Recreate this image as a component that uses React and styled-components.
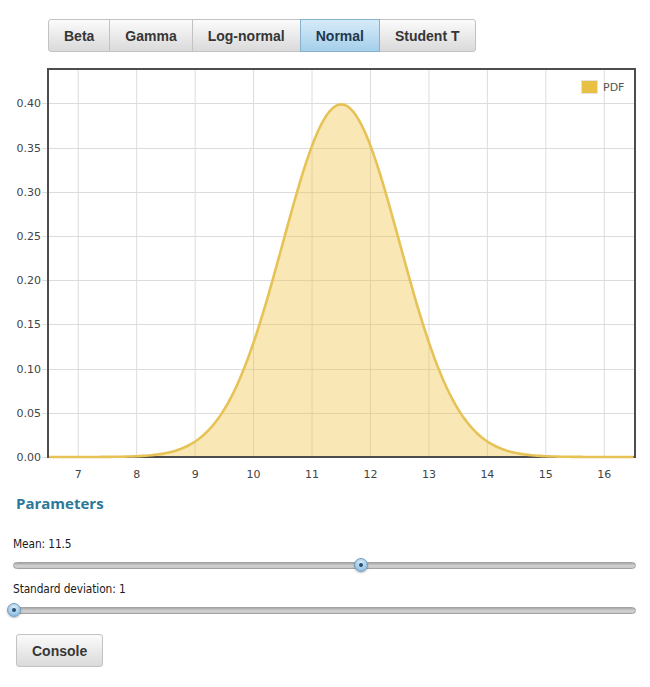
import React from "react";
import styled, { createGlobalStyle, css } from "styled-components";

const Global = createGlobalStyle`
  html, body { margin: 0; padding: 0; background: #fff; }
  body { font-family: "Liberation Sans", Arial, sans-serif; }
`;

const Page = styled.div`
  width: 650px;
  padding-top: 19px;
`;

const Toolbar = styled.div`
  display: flex;
  margin-left: 48px;
  height: 33px;
`;

const TabButton = styled.button`
  height: 33px;
  padding: 0 15px;
  margin: 0 0 0 -1px;
  font-family: "Liberation Sans", Arial, sans-serif;
  font-weight: bold;
  font-size: 14px;
  color: #363636;
  background: linear-gradient(#fbfbfb, #dadada);
  border: 1px solid #c2c2c2;
  border-radius: 0;
  cursor: pointer;
  &:first-child { margin-left: 0; border-radius: 3px 0 0 3px; }
  &:last-child { border-radius: 0 3px 3px 0; }
  ${(p) =>
    p.$active &&
    css`
      position: relative;
      z-index: 1;
      color: #1e3850;
      background: linear-gradient(#d6ebf8, #a5cfea);
      border-color: #86b0cc;
    `}
`;

const ChartSvg = styled.svg`
  display: block;
  margin-top: 8px;
  width: 650px;
  height: 425px;
`;

const Params = styled.div`
  padding: 0 14px 0 13px;
`;

const Heading = styled.h3`
  margin: 8px 0 0 3px;
  font-family: "Open Sans", sans-serif;
  font-weight: bold;
  font-size: 15px;
  line-height: 20px;
  color: #2b7898;
`;

const Label = styled.div`
  margin: ${(p) => p.$top}px 0 0 0;
  font-family: "DejaVu Sans Condensed", "DejaVu Sans", sans-serif;
  font-stretch: condensed;
  font-size: 11.8px;
  line-height: 16px;
  letter-spacing: -0.1px;
  color: #1a1a1a;
`;

const SliderBox = styled.div`
  position: relative;
  margin-top: 5px;
  height: 16px;
  display: flex;
  align-items: center;
`;

const Track = styled.div`
  flex: 1;
  height: 5px;
  border-radius: 4px;
  border: 1px solid #a3a3a3;
  background: linear-gradient(#a9a9a9, #d4d4d4 60%, #c4c4c4);
`;

const Thumb = styled.div`
  position: absolute;
  top: 1px;
  width: 12px;
  height: 12px;
  margin-left: -7px;
  border-radius: 50%;
  border: 1px solid #6f9cbf;
  background: radial-gradient(circle at 50% 30%, #d9ecf9, #8ebde0 80%);
  box-shadow: 0 1px 2px rgba(0, 0, 0, 0.25);
  display: flex;
  align-items: center;
  justify-content: center;
  &::after {
    content: "";
    width: 4px;
    height: 4px;
    border-radius: 50%;
    background: #24506f;
  }
`;

const ConsoleButton = styled.button`
  margin: 16px 0 0 3px;
  height: 33px;
  padding: 0 15px;
  font-family: "Liberation Sans", Arial, sans-serif;
  font-weight: bold;
  font-size: 14px;
  color: #363636;
  background: linear-gradient(#fbfbfb, #dadada);
  border: 1px solid #c2c2c2;
  border-radius: 3px;
`;

const X0 = 49;
const SX = 58.45;
const xs = (v) => X0 + (v - 6.5) * SX;
const ys = (v) => 457 - v * 884;

function pdf(x, m, s) {
  return Math.exp(-((x - m) ** 2) / (2 * s * s)) / (s * Math.sqrt(2 * Math.PI));
}

function Chart() {
  const pts = [];
  for (let v = 6.5; v <= 16.5001; v += 0.05) {
    pts.push([xs(v), ys(pdf(v, 11.5, 1))]);
  }
  const line = pts.map((p, i) => `${i ? "L" : "M"}${p[0].toFixed(2)},${p[1].toFixed(2)}`).join(" ");
  const area = `${line} L${xs(16.5)},457 L${xs(6.5)},457 Z`;
  const xt = [7, 8, 9, 10, 11, 12, 13, 14, 15, 16];
  const yt = [0, 0.05, 0.1, 0.15, 0.2, 0.25, 0.3, 0.35, 0.4];
  return (
    <ChartSvg viewBox="0 60 650 425">
      {xt.map((v) => (
        <line key={"vx" + v} x1={xs(v)} x2={xs(v)} y1={70} y2={457} stroke="#dcdcdc" strokeWidth="1" />
      ))}
      {yt.map((v) => (
        <line key={"hy" + v} x1={42} x2={634} y1={Math.round(ys(v)) + 0.5} y2={Math.round(ys(v)) + 0.5} stroke="#dcdcdc" strokeWidth="1" />
      ))}
      <path d={area} fill="rgba(240, 198, 72, 0.4)" />
      <rect x="48" y="69" width="587" height="388" fill="none" stroke="#4d4d4d" strokeWidth="2" />
      <path d={line} fill="none" stroke="#e6c257" strokeWidth="2.6" strokeLinejoin="round" />
      {yt.map((v) => (
        <text
          key={"ly" + v}
          x={41}
          y={ys(v) + 4}
          textAnchor="end"
          fontFamily="DejaVu Sans, sans-serif"
          fontSize="11"
          fill="#444"
        >
          {v.toFixed(2)}
        </text>
      ))}
      {xt.map((v) => (
        <text
          key={"lx" + v}
          x={xs(v)}
          y={478}
          textAnchor="middle"
          fontFamily="DejaVu Sans, sans-serif"
          fontSize="11"
          fill="#444"
        >
          {v}
        </text>
      ))}
      <rect x="581.5" y="80.5" width="16" height="13" fill="#e8c043" stroke="#e3e3e3" strokeWidth="1" />
      <text x="603" y="91" fontFamily="DejaVu Sans, sans-serif" fontSize="11" fill="#555">
        PDF
      </text>
    </ChartSvg>
  );
}

function Slider({ pct }) {
  return (
    <SliderBox>
      <Track />
      <Thumb style={{ left: `${pct}%` }} />
    </SliderBox>
  );
}

const tabs = ["Beta", "Gamma", "Log-normal", "Normal", "Student T"];

export default function App() {
  return (
    <Page>
      <Global />
      <Toolbar>
        {tabs.map((t) => (
          <TabButton key={t} $active={t === "Normal"}>
            {t}
          </TabButton>
        ))}
      </Toolbar>
      <Chart />
      <Params>
        <Heading>Parameters</Heading>
        <Label $top={23}>Mean: 11.5</Label>
        <Slider pct={55.9} />
        <Label $top={8}>Standard deviation: 1</Label>
        <Slider pct={0.2} />
        <ConsoleButton>Console</ConsoleButton>
      </Params>
    </Page>
  );
}
